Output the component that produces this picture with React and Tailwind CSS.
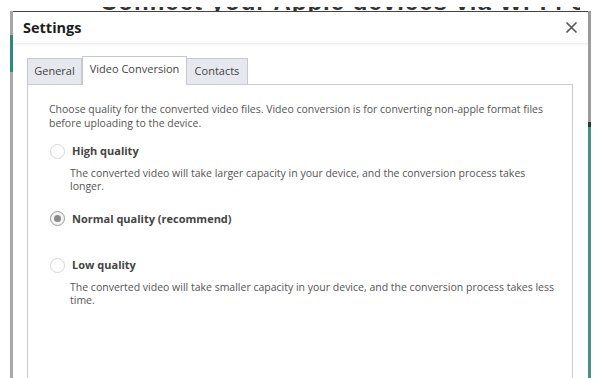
export default function App() {
  const font = { fontFamily: '"Open Sans", "Noto Sans", sans-serif' };
  const Radio = ({ checked }) => (
    <span className={`flex h-[15px] w-[15px] shrink-0 items-center justify-center rounded-full border ${checked ? 'border-[#9a9a9a] bg-[#f4f4f4]' : 'border-[#d6d6d6] bg-white'}`}>
      {checked && <span className="h-[7px] w-[7px] rounded-full bg-[#8a8a8a]" />}
    </span>
  );
  const Option = ({ label, desc, checked }) => (
    <div className="flex flex-col">
      <div className="flex items-center gap-[7px] pl-[1px]">
        <Radio checked={checked} />
        <span className="text-[11px] font-bold text-[#444]">{label}</span>
      </div>
      {desc && (
        <p className="mt-[7px] pl-[21px] pr-[10px] text-[10.5px] leading-[13px] text-[#555]">{desc}</p>
      )}
    </div>
  );
  return (
    <div className="relative h-[378px] w-[601px] overflow-hidden bg-white" style={font}>
      <div className="absolute left-[100px] top-[7px] h-[4px] w-[480px] overflow-hidden">
        <div className="mt-[-19px] whitespace-nowrap text-[24px] font-bold leading-[28px] tracking-[1px] text-[#333]" style={{ fontFamily: '"Liberation Sans", sans-serif' }}>
          Connect your Apple devices via Wi-Fi or get started
        </div>
      </div>
      {/* left strip */}
      <div className="absolute left-[10px] top-[11px] flex h-[367px] w-[3px] flex-col">
        <div className="h-[24px] bg-[#a8a8a8]" />
        <div className="h-[37px] bg-[#2e8a80]" />
        <div className="flex-1 bg-[#a8a8a8]" />
      </div>
      {/* right strip */}
      <div className="absolute left-[588px] top-[11px] flex h-[367px] w-[3px] flex-col">
        <div className="h-[111px] bg-[#9c9c9c]" />
        <div className="h-[5px] bg-[#333]" />
        <div className="flex-1 bg-[#4a8f86]" />
      </div>
      <div className="absolute left-[13px] top-[11px] flex h-[380px] w-[575px] flex-col border-t border-[#444] bg-white">
        <div className="flex h-[32px] items-center justify-between border-b border-[#f0f0f0] pl-[10px] pr-[8px] shadow-[0_1px_3px_rgba(0,0,0,0.05)]">
          <span className="text-[14.5px] font-bold text-[#1e1e1e]">Settings</span>
          <svg width="13" height="13" viewBox="0 0 13 13" className="mr-[2px]">
            <path d="M1.5 1.5 L11.5 11.5 M11.5 1.5 L1.5 11.5" stroke="#555" strokeWidth="1.6" />
          </svg>
        </div>
        <div className="flex flex-1 flex-col pl-[14px] pr-[15px] pt-[12px]">
          <div className="flex items-end">
            <div className="flex h-[26px] w-[55px] items-center justify-center border border-b-0 border-[#c5c9d0] bg-[#e6e8ee] text-[11px] text-[#444]">General</div>
            <div className="relative z-10 mb-[-1px] flex h-[29px] w-[105px] items-center justify-center border border-b-0 border-[#c5c9d0] bg-white pb-[4px] text-[11px] text-[#444]">Video Conversion</div>
            <div className="flex h-[26px] w-[61px] items-center justify-center border border-b-0 border-l-0 border-[#c5c9d0] bg-[#e6e8ee] text-[11px] text-[#444]">Contacts</div>
          </div>
          <div className="flex flex-1 flex-col border border-[#c9ccd2] bg-white pl-[21px] pt-[17px]">
            <p className="pr-[10px] text-[10.5px] leading-[14px] text-[#555]">
              Choose quality for the converted video files. Video conversion is for converting non-apple format files before uploading to the device.
            </p>
            <div className="mt-[13px] flex flex-col gap-[18px]">
              <Option label="High quality" desc="The converted video will take larger capacity in your device, and the conversion process takes longer." />
              <div className="mb-[12px]">
                <Option label="Normal quality (recommend)" checked />
              </div>
              <Option label="Low quality" desc="The converted video will take smaller capacity in your device, and the conversion process takes less time." />
            </div>
          </div>
        </div>
      </div>
    </div>
  );
}
